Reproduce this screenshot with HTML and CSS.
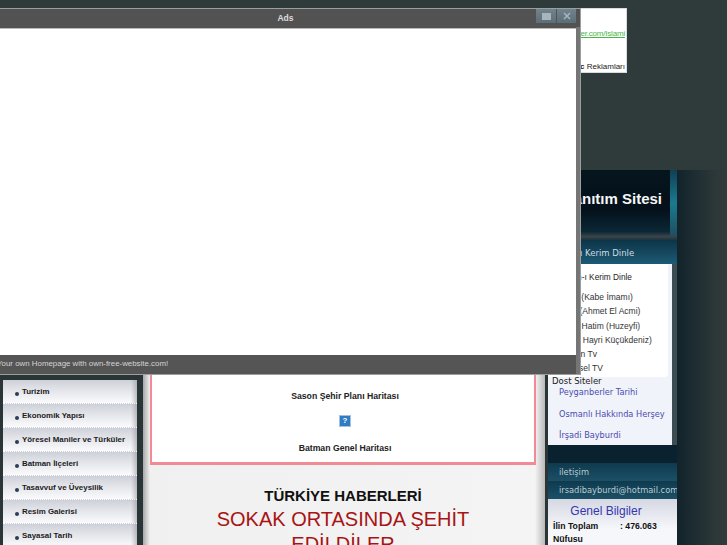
FILE: index.html
```html
<!DOCTYPE html>
<html lang="tr">
<head>
<meta charset="utf-8">
<title>Batman Tanıtım Sitesi</title>
<link rel="stylesheet" href="styles.css">
</head>
<body>
<div class="page">
  <div class="top">
    <div class="adbox">
      <a class="adlink">www.blogger.com/Islami</a>
      <span class="adfoot"><b>Google Ic</b> Reklamları</span>
    </div>
  </div>
  <div class="shell">
    <div class="main">
      <header class="banner"><span class="banner-title">Batman Tanıtım Sitesi</span><span class="banner-edge"></span></header>
      <div class="cols">
        <nav class="nav">
          <ul class="menu">
            <li class="menu-item">Turizim</li>
            <li class="menu-item">Ekonomik Yapısı</li>
            <li class="menu-item">Yöresel Maniler ve Türküler</li>
            <li class="menu-item">Batman İlçeleri</li>
            <li class="menu-item">Tasavvuf ve Üveysilik</li>
            <li class="menu-item">Resim Galerisi</li>
            <li class="menu-item">Sayasal Tarih</li>
          </ul>
        </nav>
        <main class="center">
          <section class="maps">
            <p class="map-title">Sason Şehir Planı Haritası</p>
            <span class="broken">?</span>
            <p class="map-title">Batman Genel Haritası</p>
          </section>
          <section class="news">
            <h2 class="news-head">TÜRKİYE HABERLERİ</h2>
            <h1 class="news-title">SOKAK ORTASINDA ŞEHİT EDİLDİLER</h1>
          </section>
        </main>
        <aside class="side">
          <h3 class="side-head">Kur'an-ı Kerim Dinle</h3>
          <div class="side-body">
            <div class="radio">
              <p class="radio-top">Kur'an-ı Kerim Dinle</p>
              <p class="radio-item">Sudais (Kabe İmamı)</p>
              <p class="radio-item">Hatimi (Ahmet El Acmi)</p>
              <p class="radio-item">Kur'ani Hatim (Huzeyfi)</p>
              <p class="radio-item">Hatim ( Hayri Küçükdeniz)</p>
              <p class="radio-item radio-item-tv">Kur'an Tv</p>
              <p class="radio-item radio-item-tv">Yöresel TV</p>
            </div>
            <p class="friends">Dost Siteler</p>
            <a class="friend">Peyganberler Tarihi</a>
            <a class="friend">Osmanlı Hakkında Herşey</a>
            <a class="friend">İrşadi Bayburdi</a>
          </div>
          <div class="contact">
            <p class="contact-line">iletişim</p>
            <p class="contact-line">irsadibayburdi@hotmail.com</p>
          </div>
          <div class="info">
            <h4 class="info-head">Genel Bilgiler</h4>
            <div class="info-row"><b class="info-key">İlin Toplam Nüfusu</b><b class="info-val">: 476.063</b></div>
          </div>
        </aside>
      </div>
    </div>
    <div class="edge"></div>
  </div>
</div>
<div class="window">
  <div class="win-title">Ads
    <div class="win-btns">
      <span class="win-btn"><svg width="9" height="7" viewBox="0 0 9 7"><rect width="9" height="7" fill="#a9b5bb"/></svg></span>
      <span class="win-btn"><svg width="8" height="8" viewBox="0 0 8 8"><path d="M1 1l6 6M7 1l-6 6" stroke="#a9b5bb" stroke-width="1.5"/></svg></span>
    </div>
  </div>
  <div class="win-body"></div>
  <div class="win-status">Your own Homepage with own-free-website.com!</div>
</div>
</body>
</html>
```
FILE: styles.css
```css
* { box-sizing: border-box; }
html, body { margin: 0; padding: 0; height: 545px; overflow: hidden; background: #2f3a3b; }
body { font-family: "Liberation Sans", Arial, sans-serif; }
p, h1, h2, h3, h4, ul { margin: 0; padding: 0; }

.page { width: 727px; height: 545px; overflow: hidden; }
.top { height: 170px; padding: 8px 100px 0 0; display: flex; justify-content: flex-end; }
.adbox { width: 468px; height: 65px; background: #fff; border: 1px solid #d8dcdc; display: flex; flex-direction: column; align-items: flex-end; padding: 20px 1px 0 0; }
.adlink { font-size: 8px; line-height: 10px; color: #4ab54a; text-decoration: underline; letter-spacing: -.2px; }
.adfoot { font-size: 8px; line-height: 10px; color: #222; margin-top: 23px; }

.shell { display: flex; height: 375px; }
.main { width: 677px; flex: none; }
.edge { flex: 1; background: linear-gradient(90deg, #12232b 0, #1a2a30 25%, #2a3637 70%, #323b3c 100%); }

.banner { height: 70px; background: linear-gradient(180deg, #05151e 0, #04101a 55%, #0b2735 88%, #3a4448 95%, #1c3340 100%); display: flex; justify-content: flex-end; align-items: flex-start; }
.banner-title { font-size: 15px; font-weight: bold; line-height: 18px; color: #f4f6f8; margin: 20px 8px 0 0; white-space: nowrap; }
.banner-edge { width: 7px; height: 66px; background: linear-gradient(180deg, #0f3f55, #1c7a90 50%, #1d4f60); }

.cols { display: flex; height: 305px; background: #26393e; }
.nav { width: 143px; flex: none; padding: 140px 5px 0 3px; background: #2a3537; }
.menu { list-style: none; background: #fff; width: 134px; }
.menu-item { height: 24px; padding-left: 19px; position: relative; font-size: 7.9px; font-weight: bold; line-height: 24px; color: #1c1c24; background: linear-gradient(90deg, transparent 128px, rgba(150,150,155,.55) 100%), linear-gradient(180deg, #cdd0d9 0, #dfe1e6 35%, #fbfbfc 100%); border-bottom: 1px dotted #fff; white-space: nowrap; }
.menu-item::before { content: ""; position: absolute; left: 12px; top: 12px; width: 4px; height: 4px; border-radius: 50%; background: #2a3c5c; }

.center { width: 402px; flex: none; padding-right: 9px; padding-left: 7px; background: linear-gradient(90deg, #a8a8a8 0, #f0f0f0 7px, #f4f4f4 392px, #b8b8b8 100%); display: flex; flex-direction: column; align-items: center; }
.maps { width: 386px; height: 225px; background: #fff; border: solid #f28a95; border-width: 0 2px 3px; padding: 150px 0 0 4px; display: flex; flex-direction: column; align-items: center; flex: none; }
.map-title { font-size: 8.7px; font-weight: bold; line-height: 12px; color: #222; }
.broken { display: block; width: 12px; height: 12px; margin: 13px 0 15px; background: #2e7cc4; border: 1px solid #a6bfdc; color: #fff; font-size: 8px; font-weight: bold; line-height: 10px; text-align: center; }
.news { padding-top: 22px; text-align: center; width: 280px; }
.news-head { font-size: 15px; line-height: 18px; font-weight: bold; color: #111; }
.news-title { font-size: 20px; line-height: 25px; font-weight: normal; color: #a81414; margin-top: 2px; }

.side { width: 132px; flex: none; padding-left: 3px; font-family: "DejaVu Sans", sans-serif; background: #2a3537; }
.side-head { height: 24px; font-size: 8.5px; line-height: 26px; font-weight: normal; color: #cfdce2; padding-left: 2px; background: linear-gradient(180deg, #0d3447, #1c5a75); white-space: nowrap; }
.side-body { background: #f1f3fa; height: 181px; border-right: 5px solid #3e4d52; }
.radio { background: #fff; height: 113px; margin-right: 4px; padding: 7px 0 0 4px; overflow: hidden; border-radius: 0 0 3px 0; font-family: "Liberation Sans", Arial, sans-serif; }
.radio-top { font-size: 8.3px; line-height: 12px; color: #222; padding-left: 6px; margin-bottom: 7px; white-space: nowrap; }
.radio-item { font-size: 8.5px; line-height: 14.3px; color: #333; padding-left: 1px; white-space: nowrap; }
.radio-item-tv { padding-left: 9px; }
.friends { font-size: 8.5px; line-height: 10px; color: #222; padding-left: 4px; margin-top: -1px; }
.friend { display: block; font-size: 8.2px; line-height: 12px; color: #4a4ab0; padding-left: 11px; margin-bottom: 9.5px; white-space: nowrap; }
.contact { height: 54px; padding-top: 18px; background: #0a2230; overflow: hidden; }
.contact-line { height: 18px; font-size: 8.3px; line-height: 18px; color: #b8ccd4; padding-left: 11px; background: linear-gradient(180deg, #0f3a4e, #1c5066); white-space: nowrap; }
.info { background: linear-gradient(180deg, #d5d8e2 0, #f6f7fb 30px); height: 60px; padding-top: 5px; font-family: "Liberation Sans", Arial, sans-serif; }
.info-head { font-size: 12px; line-height: 14px; font-weight: normal; color: #3535b0; text-align: center; padding-right: 13px; }
.info-row { display: flex; padding: 2px 0 0 5px; font-size: 8.7px; line-height: 12.5px; color: #111; }
.info-key { width: 67px; }

.window { position: absolute; left: -10px; top: 8px; width: 591px; height: 367px; background: #555; border: 1px solid #9a9f9f; display: flex; flex-direction: column; box-shadow: inset 0 -1px 0 #777; }
.win-title { height: 19px; flex: none; text-align: center; position: relative; color: #ddd; font-size: 8.5px; font-weight: bold; line-height: 18px; background: #525252; }
.win-btns { position: absolute; right: 4px; top: 0; display: flex; }
.win-btn { width: 19px; height: 14px; margin-left: 1px; display: flex; align-items: center; justify-content: center; background: linear-gradient(180deg, #71838d, #5c6e78); }
.win-btn:first-child { width: 20px; }
.win-body { height: 327px; flex: none; background: #fff; border-top: 1px solid #bbb; margin-right: 4px; }
.win-status { flex: 1; padding-left: 6px; font-size: 7.9px; line-height: 18px; color: #d4d4d4; background: #555; }
.window::after { content: ""; position: absolute; right: 0; top: 18px; bottom: 0; width: 4px; background: #757575; }
```
